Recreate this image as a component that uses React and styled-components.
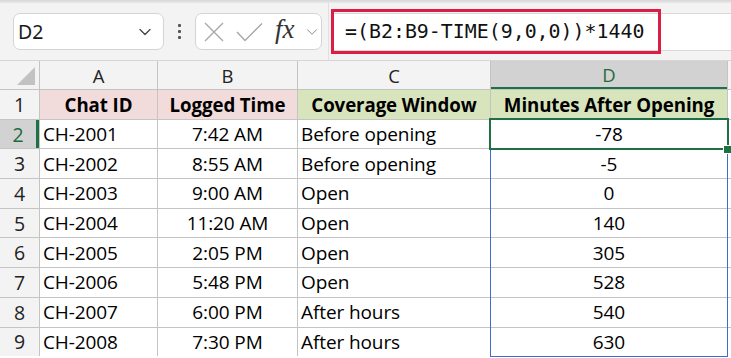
import React from 'react'
import styled, { createGlobalStyle } from 'styled-components'
import { ChevronDown } from 'lucide-react'

const GlobalStyle = createGlobalStyle`
  html, body {
    margin: 0;
    padding: 0;
    background: #ffffff;
    overflow: hidden;
  }
`

const COLS = [39, 117, 139, 192, 236, 4]
const ROW_H = 28.7
const HEAD_H = 28

const Page = styled.div`
  width: 731px;
  height: 358px;
  font-family: 'Open Sans', 'Noto Sans', sans-serif;
  color: #000;
  overflow: hidden;
`

const TopStrip = styled.div`
  height: 3px;
  background: linear-gradient(#d6d6d6, #e9e9e9);
`

const Toolbar = styled.div`
  height: 57px;
  background: #f3f3f3;
  display: flex;
  align-items: center;
  padding-left: 13px;
  box-sizing: border-box;
`

const NameBox = styled.div`
  width: 151px;
  height: 37px;
  box-sizing: border-box;
  background: #fff;
  border: 1px solid #d4d4d4;
  border-radius: 7px;
  display: flex;
  align-items: center;
  justify-content: space-between;
  padding: 0 8px 0 4px;
  font-family: 'Noto Sans', sans-serif;
  font-size: 19.5px;
  color: #1a1a1a;
`

const Dots = styled.div`
  width: 31px;
  display: flex;
  flex-direction: column;
  align-items: center;
  gap: 3px;
  span {
    width: 3px;
    height: 3px;
    background: #555;
    border-radius: 1px;
  }
`

const IconBox = styled.div`
  width: 127px;
  height: 37px;
  box-sizing: border-box;
  background: #fff;
  border: 1px solid #d4d4d4;
  border-radius: 7px;
  display: flex;
  align-items: center;
  padding: 0 0 0 8px;
`

const Fx = styled.span`
  font-family: 'Liberation Serif', 'DejaVu Serif', serif;
  font-style: italic;
  font-size: 27px;
  line-height: 1;
  color: #333;
  margin: -4px 0 0 12px;
  width: 22px;
`

const Divider = styled.div`
  width: 1px;
  align-self: stretch;
  background: #e0e0e0;
  margin-left: 6px;
`

const FormulaBar = styled.div`
  position: relative;
  flex: 1;
  height: 38px;
  box-sizing: border-box;
  background: #fff;
  border-top: 1px solid #d9d9d9;
  border-bottom: 1px solid #d9d9d9;
  margin-left: 2px;
  display: flex;
  align-items: center;
  padding-left: 14px;
  font-family: 'DejaVu Sans Mono', 'Liberation Mono', monospace;
  font-size: 19.9px;
  color: #111;
`

const Highlight = styled.div`
  position: absolute;
  left: 0;
  top: -5px;
  width: 330px;
  height: 45px;
  box-sizing: border-box;
  border: 3px solid #dc1d45;
  pointer-events: none;
`

const SheetWrap = styled.div`
  position: relative;
`

const Grid = styled.div`
  display: grid;
  grid-template-columns: ${COLS.map((c) => c + 'px').join(' ')};
  grid-template-rows: ${HEAD_H}px;
  grid-auto-rows: ${ROW_H}px;
  column-gap: 1px;
  row-gap: 1px;
  background: #c4c4c4;
  border-top: 1px solid #d6d6d6;
`

const Corner = styled.div`
  background: #f3f3f3;
  position: relative;
  &::after {
    content: '';
    position: absolute;
    right: 4px;
    bottom: 4px;
    width: 0;
    height: 0;
    border-left: 18px solid transparent;
    border-bottom: 18px solid #c2c2c2;
  }
`

const ColHead = styled.div`
  background: ${({ $active }) => ($active ? '#d2d2d2' : '#f3f3f3')};
  color: ${({ $active }) => ($active ? '#1d6b3c' : '#222')};
  border-bottom: ${({ $active }) => ($active ? '2px solid #1e7145' : 'none')};
  display: flex;
  align-items: center;
  justify-content: center;
  font-size: 18.5px;
  box-sizing: border-box;
`

const RowHead = styled.div`
  background: ${({ $active }) => ($active ? '#d2d2d2' : '#f3f3f3')};
  color: ${({ $active }) => ($active ? '#1d6b3c' : '#222')};
  border-right: ${({ $active }) => ($active ? '3px solid #1e7145' : 'none')};
  display: flex;
  align-items: center;
  justify-content: center;
  font-size: 19.5px;
  box-sizing: border-box;
`

const Cell = styled.div`
  background: ${({ $bg }) => $bg || '#fff'};
  font-weight: ${({ $bold }) => ($bold ? 700 : 400)};
  font-size: ${({ $bold }) => ($bold ? '18.7px' : '19px')};
  display: flex;
  align-items: center;
  justify-content: ${({ $align }) => ($align === 'center' ? 'center' : 'flex-start')};
  padding: 0 3px;
  white-space: nowrap;
  overflow: hidden;
  letter-spacing: -0.1px;
`

const Filler = styled.div`
  background: ${({ $head }) => ($head ? '#f3f3f3' : '#fff')};
`

const RangeBox = styled.div`
  position: absolute;
  box-sizing: border-box;
  border: 1.5px solid #3b6fcf;
  pointer-events: none;
`

const ActiveBox = styled.div`
  position: absolute;
  box-sizing: border-box;
  border: 2.5px solid #1e7145;
  pointer-events: none;
`

const Handle = styled.div`
  position: absolute;
  width: 7px;
  height: 7px;
  background: #1e7145;
  border: 1px solid #fff;
  pointer-events: none;
`

const CancelIcon = () => (
  <svg width="20" height="20" viewBox="0 0 20 20">
    <path d="M1 1 L19 19 M19 1 L1 19" stroke="#a8a8a8" strokeWidth="1.4" fill="none" />
  </svg>
)

const EnterIcon = () => (
  <svg width="27" height="20" viewBox="0 0 27 20" style={{ marginLeft: 12 }}>
    <path d="M1 10 L9 18.5 L26 1.5" stroke="#a8a8a8" strokeWidth="1.4" fill="none" />
  </svg>
)

const PINK = '#f2dcdb'
const GREEN = '#d8e4bc'

const header = [
  { text: 'Chat ID', bg: PINK },
  { text: 'Logged Time', bg: PINK },
  { text: 'Coverage Window', bg: GREEN },
  { text: 'Minutes After Opening', bg: GREEN },
]

const rows = [
  ['CH-2001', '7:42 AM', 'Before opening', '-78'],
  ['CH-2002', '8:55 AM', 'Before opening', '-5'],
  ['CH-2003', '9:00 AM', 'Open', '0'],
  ['CH-2004', '11:20 AM', 'Open', '140'],
  ['CH-2005', '2:05 PM', 'Open', '305'],
  ['CH-2006', '5:48 PM', 'Open', '528'],
  ['CH-2007', '6:00 PM', 'After hours', '540'],
  ['CH-2008', '7:30 PM', 'After hours', '630'],
]

const aligns = ['left', 'center', 'left', 'center']

const colLeft = (i) => COLS.slice(0, i).reduce((a, b) => a + b + 1, 0)
const rowTop = (r) => 1 + HEAD_H + 1 + (r - 1) * (ROW_H + 1)

export default function App() {
  const dLeft = colLeft(4)
  const dW = COLS[4]
  return (
    <Page>
      <GlobalStyle />
      <TopStrip />
      <Toolbar>
        <NameBox>
          <span>D2</span>
          <ChevronDown size={20} strokeWidth={1.5} color="#444" />
        </NameBox>
        <Dots>
          <span />
          <span />
          <span />
        </Dots>
        <IconBox>
          <CancelIcon />
          <EnterIcon />
          <Fx>fx</Fx>
          <ChevronDown size={18} strokeWidth={1.3} color="#8a8a8a" style={{ marginLeft: 6 }} />
        </IconBox>
        <Divider />
        <FormulaBar>
          =(B2:B9-TIME(9,0,0))*1440
          <Highlight />
        </FormulaBar>
      </Toolbar>
      <SheetWrap>
        <Grid>
          <Corner />
          {['A', 'B', 'C', 'D'].map((l) => (
            <ColHead key={l} $active={l === 'D'}>
              {l}
            </ColHead>
          ))}
          <Filler $head />
          <RowHead>1</RowHead>
          {header.map((h) => (
            <Cell key={h.text} $bg={h.bg} $bold $align="center">
              {h.text}
            </Cell>
          ))}
          <Filler />
          {rows.map((r, i) => (
            <React.Fragment key={r[0]}>
              <RowHead $active={i === 0}>{i + 2}</RowHead>
              {r.map((v, j) => (
                <Cell key={j} $align={aligns[j]}>
                  {v}
                </Cell>
              ))}
              <Filler />
            </React.Fragment>
          ))}
        </Grid>
        <RangeBox
          style={{ left: dLeft - 1, top: rowTop(2) - 1, width: dW + 2, height: 8 * (ROW_H + 1) + 1 }}
        />
        <ActiveBox style={{ left: dLeft - 2, top: rowTop(2) - 2, width: dW + 4, height: ROW_H + 4 }} />
        <Handle style={{ left: dLeft + dW - 4, top: rowTop(2) + ROW_H - 3 }} />
      </SheetWrap>
    </Page>
  )
}
